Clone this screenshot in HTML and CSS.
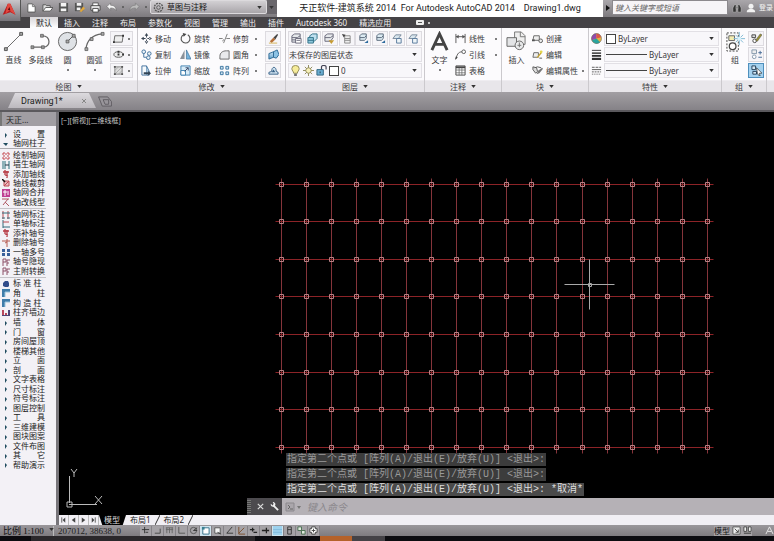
FILE: index.html
```html
<!DOCTYPE html>
<html lang="zh-CN">
<head>
<meta charset="utf-8">
<title>天正软件-建筑系统 2014</title>
<link rel="stylesheet" href="styles.css">
</head>
<body>
<svg class="sprite" aria-hidden="true">
  <defs>
    <linearGradient id="blueFill" x1="0" y1="0" x2="0" y2="1"><stop offset="0" stop-color="#cfe6f5"/><stop offset="1" stop-color="#5b9cc8"/></linearGradient>
  </defs>
  <symbol id="caret" viewBox="0 0 6 4"><path d="M0 0h6L3 4z" fill="#333"/></symbol>
  <symbol id="new" viewBox="0 0 12 12"><path d="M2 2h5l3 3v6H2z" fill="#fff" stroke="#555"/><path d="M7 2v3h3" fill="none" stroke="#777"/></symbol>
  <symbol id="open" viewBox="0 0 12 12"><path d="M1 10V3h3l1 1h4v2" fill="#ddd" stroke="#555"/><path d="M1 10l3-4h8l-3 4z" fill="#fff" stroke="#555"/></symbol>
  <symbol id="save" viewBox="0 0 12 12"><path d="M1 1h10v10H1z" fill="#555"/><path d="M3 1h6v4H3zM3 7h6v3H3z" fill="#f4f4f4"/></symbol>
  <symbol id="saveas" viewBox="0 0 12 12"><path d="M1 1h9v9H1z" fill="#555"/><path d="M3 1h5v3H3zM3 6h4v3H3z" fill="#f4f4f4"/><path d="M6 10l4-5 2 2-4 4z" fill="#e0a83c"/></symbol>
  <symbol id="print" viewBox="0 0 12 12"><path d="M3 1h6v4H3z" fill="#fff" stroke="#555"/><path d="M1 4h10v5H1z" fill="#eee" stroke="#444"/><path d="M3 7h6v4H3z" fill="#fff" stroke="#444"/></symbol>
  <symbol id="undo" viewBox="0 0 12 12"><path d="M1 5l4-4v2.500c4 0 6 2 6 6-1-2-3-3-6-3V9z" fill="#f4f4f4" stroke="#666" stroke-width=".6"/></symbol>
  <symbol id="redo" viewBox="0 0 12 12"><path d="M11 5L7 1v2.500c-4 0-6 2-6 6 1-2 3-3 6-3V9z" fill="#bbb" stroke="#777" stroke-width=".6"/></symbol>
  <symbol id="gear" viewBox="0 0 12 12"><circle cx="6" cy="6" r="4.500" fill="none" stroke="#555" stroke-width="1.500" stroke-dasharray="2 1"/><circle cx="6" cy="6" r="2" fill="none" stroke="#555"/></symbol>
  <symbol id="binoc" viewBox="0 0 12 12"><path d="M1 11V6l2-4h2v9zM11 11V6L9 2H7v9zM5 4h2v3H5z" fill="#333" stroke="#ccc" stroke-width=".6"/></symbol>
  <symbol id="user" viewBox="0 0 12 12"><circle cx="6" cy="4" r="3" fill="#f2f2f2"/><path d="M1 11c0-3 2-3 4-4h2c2 1 4 1 4 4z" fill="#f2f2f2"/></symbol>

  <symbol id="line" viewBox="0 0 22 22"><path d="M3 19L19 3" stroke="#666" fill="none"/><g fill="#aaa" stroke="#555"><path d="M1.500 17.500h3v3h-3zM17.500 1.500h3v3h-3z"/></g></symbol>
  <symbol id="pline" viewBox="0 0 22 22"><path d="M2 17h12c8 0 8-12-1-12H12" stroke="#666" stroke-width="1.300" fill="none"/><g fill="#999" stroke="#555" stroke-width=".7"><path d="M1 15.500h3v3H1zM12 15.500h3v3h-3zM11 3.500h3v3h-3z"/></g></symbol>
  <symbol id="circle" viewBox="0 0 22 22"><circle cx="11" cy="11" r="9.500" fill="#dfe2e6" stroke="#666"/><path d="M11 11l6-6" stroke="#555"/><path d="M9.500 9.500h3v3h-3zM16 3.500h3v3h-3z" fill="#aaa" stroke="#555" stroke-width=".8"/></symbol>
  <symbol id="arc" viewBox="0 0 22 22"><path d="M2 19C3 10 9 4 19 3" stroke="#666" stroke-width="1.200" fill="none"/><path d="M1 17.500h3v3H1zM6.500 7h3v3h-3zM18 1.500h3v3h-3z" fill="#aaa" stroke="#555" stroke-width=".8"/></symbol>
  <symbol id="rect" viewBox="0 0 12 12"><path d="M2 3h9l-1 7H1z" fill="#eee" stroke="#666"/><path d="M0 9h2v2H0zM10 2h2v2h-2z" fill="#333"/></symbol>
  <symbol id="ellipse" viewBox="0 0 12 12"><ellipse cx="6" cy="6" rx="5" ry="3" fill="#eee" stroke="#555"/><path d="M5 5h2v2H5zM5 2h2v2H5zM10 5h2v2h-2z" fill="#333"/></symbol>
  <symbol id="hatch" viewBox="0 0 12 12"><path d="M2 2h8v8H2z" fill="#ddd" stroke="#888"/><path d="M2 6l4-4M2 10l8-8M6 10l4-4" stroke="#999" stroke-width=".7"/><path d="M1 1h2v2H1zM9 1h2v2H9zM1 9h2v2H1zM9 9h2v2H9z" fill="#555"/></symbol>

  <symbol id="move" viewBox="0 0 12 12"><path d="M6 0l2 3H4zM6 12l2-3H4zM0 6l3-2v4zM12 6L9 4v4zM5.500 2h1v3h-1zM5.500 7h1v3h-1zM2 5.500h3v1H2zM7 5.500h3v1H7z" fill="#3a4654"/></symbol>
  <symbol id="copy" viewBox="0 0 12 12"><g fill="#e8f1f8" stroke="#3d6f9b"><circle cx="3" cy="3" r="2"/><circle cx="9" cy="5" r="2"/><circle cx="8" cy="9.500" r="2"/><path d="M3 5v4h3" fill="none"/></g></symbol>
  <symbol id="stretch" viewBox="0 0 12 12"><path d="M1 1h5v10H1z" fill="#f5f9fc" stroke="#3d6f9b"/><path d="M6 1l3 6v4H6" fill="#bcd8ec" stroke="#3d6f9b"/><path d="M3 8h5l-1-2 4 3-4 3 1-2H3z" fill="#345"/></symbol>
  <symbol id="rotate" viewBox="0 0 12 12"><path d="M8.500 2A4.800 4.800 0 1 1 4 1.800" fill="none" stroke="#555" stroke-width="1.200"/><path d="M3 0l4 1-3 3z" fill="#444"/></symbol>
  <symbol id="mirror" viewBox="0 0 12 12"><path d="M5 1v10H0z" fill="#8a9199"/><path d="M7 1v10h5z" fill="#77b3dc" stroke="#346a94" stroke-width=".7"/></symbol>
  <symbol id="scale" viewBox="0 0 12 12"><path d="M1 1h10v10H1z" fill="#d8ebf7" stroke="#3d7fae"/><path d="M1 6h5v5H1z" fill="#fff" stroke="#3d7fae"/><path d="M5 7l4-4M6 3h3v3" fill="none" stroke="#346"/></symbol>
  <symbol id="trim" viewBox="0 0 12 12"><path d="M0 6h4M8 6h4M5 11L9 1M4 9l1-2" stroke="#777" fill="none"/></symbol>
  <symbol id="fillet" viewBox="0 0 12 12"><path d="M1 11V8c0-4 3-6 7-6h3v9z" fill="#e9eaec" stroke="#666"/></symbol>
  <symbol id="array" viewBox="0 0 12 12"><g fill="#cfe3f1" stroke="#39739e"><path d="M1.500 1.500h3v3h-3zM7.500 1.500h3v3h-3zM1.500 7.500h3v3h-3zM7.500 7.500h3v3h-3z"/></g></symbol>
  <symbol id="erase" viewBox="0 0 12 12"><path d="M2 9l4-4 2 2-4 4z" fill="#b56f38"/><path d="M6 5l4-4 1 1-3 5z" fill="#444"/><path d="M1 11h9" stroke="#d3b04f"/></symbol>
  <symbol id="explode" viewBox="0 0 12 12"><path d="M1 5l5-2v6l-5 2z" fill="url(#blueFill)" stroke="#2b6894"/><path d="M6 3l4-2 2 5-3 4-3-1z" fill="#8dc3e5" stroke="#2b6894"/></symbol>
  <symbol id="offset" viewBox="0 0 12 12"><path d="M1 10V8l3-1c0-6 5-6 5 0l2 1v2z" fill="#cfe2f0" stroke="#345f85"/><path d="M4 8l2-3 2 3z" fill="#345f85"/></symbol>
  <symbol id="layers" viewBox="0 0 12 12"><path d="M1 3l3-2h6v6l-3 3H1z" fill="#e5e8eb" stroke="#667"/><path d="M1 5h6l3-2M1 7.500h5" fill="none" stroke="#667"/><path d="M5 6h6v5H5z" fill="#fff" stroke="#667"/><path d="M6 8h4" stroke="#667"/></symbol>
  <symbol id="layersBlue" viewBox="0 0 12 12"><path d="M3 3l3-2h5v5L8 9H3z" fill="#bfe0ef" stroke="#2d7087"/><path d="M1 5h6v6H1zM1 8h6" fill="#8fc7dc" stroke="#2d7087"/></symbol>
  <symbol id="layersPen" viewBox="0 0 12 12"><path d="M1 3l3-2h6v4L7 9H1z" fill="#e5e8eb" stroke="#667"/><path d="M1 5h6l3-2" fill="none" stroke="#667"/><path d="M5 8h6l-3 4z" fill="#c59b32"/></symbol>
  <symbol id="layersArrow" viewBox="0 0 12 12"><path d="M4 3h6v8H4zM4 6h6M4 8h6" fill="#eee" stroke="#888"/><path d="M1 1l4 1-2 3z" fill="#444"/></symbol>
  <symbol id="layersDown" viewBox="0 0 12 12"><path d="M2 3l2-2h5v5L7 8H2z" fill="#dcebf2" stroke="#567"/><path d="M2 5h5l2-2" fill="none" stroke="#567"/><path d="M7 11l4-3v3z" fill="#2d6b9e"/></symbol>
  <symbol id="layersOff" viewBox="0 0 12 12"><path d="M1 6l3-4h6L7 6z" fill="#d8e6ee" stroke="#789"/><path d="M5 6h5v5H5z" fill="#eef5f8" stroke="#579"/></symbol>
  <symbol id="bulb" viewBox="0 0 12 12"><path d="M4 9C4 7 2 6 2 4a4 3.500 0 0 1 8 0c0 2-2 3-2 5z" fill="#f6ec9a" stroke="#8d8652"/><path d="M4.500 9.500h3V12h-3z" fill="#777"/></symbol>
  <symbol id="sun" viewBox="0 0 12 12"><path d="M6 0v12M0 6h12M2 2l8 8M10 2l-8 8" stroke="#8c8657"/><circle cx="6" cy="6" r="3" fill="#f8f1b8" stroke="#8c8657"/></symbol>
  <symbol id="lock" viewBox="0 0 12 12"><path d="M1 5h7v6H1z" fill="#6aaed2" stroke="#2e647f"/><path d="M6 5V2c0-2 5-2 5 0v3" fill="none" stroke="#445" stroke-width="1.300"/><path d="M4 7h1v2H4z" fill="#234"/></symbol>
  <symbol id="bigA" viewBox="0 0 20 22"><path d="M2 20L10 3l8 17M5 14h10" fill="none" stroke="#444" stroke-width="3"/></symbol>
  <symbol id="dim" viewBox="0 0 12 12"><path d="M1 1v10M11 1v10M1 4h10" fill="none" stroke="#555"/><path d="M1 4l3-2v4zM11 4L8 2v4z" fill="#555"/></symbol>
  <symbol id="leader" viewBox="0 0 12 12"><path d="M1 11c1-4 2-8 7-8" fill="none" stroke="#555"/><circle cx="9.500" cy="3" r="2" fill="#fff" stroke="#555"/><path d="M0 12l1-4 2 1z" fill="#444"/></symbol>
  <symbol id="table" viewBox="0 0 12 12"><path d="M1 1h10v10H1z" fill="#fff" stroke="#444"/><path d="M1 2.500h10" stroke="#444" stroke-width="2"/><path d="M1 5.500h10M1 8.500h10M4.500 3v8M7.500 3v8" stroke="#666" stroke-width=".8"/></symbol>
  <symbol id="insert" viewBox="0 0 22 22"><path d="M9 1h7l4 4v9H9z" fill="#eee" stroke="#777"/><path d="M15 1v5h5" fill="none" stroke="#777"/><path d="M1 7h10v9H1z" fill="#e3e4e6" stroke="#666"/><circle cx="14" cy="15" r="4.500" fill="#e9eaeb" stroke="#666"/><path d="M14 12v5M12 15h4" stroke="#777"/></symbol>
  <symbol id="create" viewBox="0 0 12 12"><path d="M2 3h6v5H1l1-5z" fill="#eee" stroke="#666"/><circle cx="9.500" cy="8.500" r="2" fill="#eee" stroke="#555"/><path d="M0 7h3v2H0z" fill="#555"/></symbol>
  <symbol id="editBlock" viewBox="0 0 12 12"><path d="M2 4h5v5H1l1-5z" fill="#eee" stroke="#666"/><path d="M5 10l1-2 4-5 1 1-4 5z" fill="#c9a731"/><circle cx="10" cy="3" r="1.500" fill="#e3d54b"/><path d="M8 10h3" stroke="#555"/></symbol>
  <symbol id="editAttr" viewBox="0 0 12 12"><path d="M1 2l4 1 1 4-2 2-3-4z" fill="#ddd" stroke="#555"/><path d="M5 10l2-4 4-3 1 1-4 5z" fill="#777"/><path d="M3 3l3-1 4 1" fill="none" stroke="#555"/></symbol>
  <symbol id="wheel" viewBox="0 0 12 12"><circle cx="6" cy="6" r="5.500" fill="#e4b340"/><path d="M6 6V.500A5.500 5.500 0 0 0 1 8z" fill="#8f4cae"/><path d="M6 6L1 8a5.500 5.500 0 0 0 9 2z" fill="#2aa6a0"/><path d="M6 6V.500a5.500 5.500 0 0 1 5 4z" fill="#e0564a"/><circle cx="6" cy="6" r="5.500" fill="none" stroke="#666" stroke-width=".6"/></symbol>
  <symbol id="weights" viewBox="0 0 12 12"><path d="M1 1.500h10" stroke="#333"/><path d="M1 4.500h10" stroke="#333" stroke-width="1.600"/><path d="M1 7.500h10" stroke="#333" stroke-width="2"/><path d="M1 10.800h10" stroke="#333" stroke-width="2.400"/></symbol>
  <symbol id="types" viewBox="0 0 12 12"><path d="M1 2.500h10" stroke="#555" stroke-dasharray="3 1"/><path d="M1 5h10" stroke="#555"/><path d="M1 7.500h10" stroke="#555" stroke-dasharray="2 1"/><path d="M1 10h10" stroke="#555" stroke-dasharray="1 1"/></symbol>
  <symbol id="group" viewBox="0 0 22 22"><path d="M2 2h12v19H2z" fill="#fafafa" stroke="#444" stroke-dasharray="2 1.500"/><path d="M4 5h6v5H4z" fill="#f3edb0" stroke="#666"/><circle cx="8" cy="16" r="3.500" fill="#fff" stroke="#444" stroke-width="1.300"/><path d="M15 1v14M9 8h12M11 4l8 8M19 4l-8 8" stroke="#7fb9d4"/><circle cx="15" cy="8" r="2" fill="#d8f2fb"/></symbol>
  <symbol id="groupEdit" viewBox="0 0 12 12"><path d="M1 2h4v3H1z" fill="#ddd" stroke="#444"/><circle cx="4" cy="8.500" r="2" fill="#fff" stroke="#444"/><path d="M5 8l5-7 2 1-5 7z" fill="#9a9233" stroke="#444" stroke-width=".5"/></symbol>
  <symbol id="groupAdd" viewBox="0 0 12 12"><path d="M1 1h5v4H1z" fill="#eee" stroke="#8296aa"/><circle cx="3.500" cy="8.500" r="2" fill="#fff" stroke="#8296aa"/><path d="M8 4h4M10 2v4M8 9h4" stroke="#456a95"/></symbol>
  <symbol id="groupPick" viewBox="0 0 12 12"><path d="M1 1h4v4H1zM2 7h4v3H2z" fill="#d4e8f5" stroke="#223d55"/><path d="M6 3l6 6H9l1 3-2-1-1-2z" fill="#fff" stroke="#222" stroke-width=".7"/></symbol>

  <symbol id="tri" viewBox="0 0 8 8"><path d="M3 2l2 2-2 3z" fill="#1f4b5e"/></symbol>
  <symbol id="triDown" viewBox="0 0 8 8"><path d="M1 3h5L4 6z" fill="#1f4b5e"/></symbol>
  <symbol id="pGrid" viewBox="0 0 8 8"><path d="M2 0v8M6 0v8M0 2h8M0 6h8" stroke="#c4474e" stroke-dasharray="2 1"/></symbol>
  <symbol id="pWall" viewBox="0 0 8 8"><path d="M1 0v8M3 0v8M7 0v8" stroke="#28707c"/><path d="M3 4h4" stroke="#234"/></symbol>
  <symbol id="pAdd" viewBox="0 0 8 8"><path d="M1 2h6M3 0v5M5 1v7M3 5l3 1" stroke="#b63843" fill="none" stroke-width="1.300"/></symbol>
  <symbol id="pDel" viewBox="0 0 8 8"><path d="M0 2h8M5 0v8M3 4l2-1" stroke="#b65a50" fill="none"/></symbol>
  <symbol id="pCut" viewBox="0 0 8 8"><path d="M2 2h5v5H2zM2 7l5-5" stroke="#bd4854" fill="#e9bcc1"/><path d="M0 0l3 3" stroke="#111" stroke-width="1.500"/></symbol>
  <symbol id="pMerge" viewBox="0 0 8 8"><path d="M0 0h8v8H0z" fill="#bf3f92"/><path d="M1 3h6M3 1v6M5 5h2" stroke="#fff"/></symbol>
  <symbol id="pType" viewBox="0 0 8 8"><path d="M0 1h7M6 1L1 7M3 4l4 4" stroke="#b05965" fill="none"/></symbol>
  <symbol id="pDim" viewBox="0 0 8 8"><path d="M1 0v8M6 0v8" stroke="#b84b52"/><path d="M0 2h8M0 7h3M5 7h3" stroke="#356d7c"/></symbol>
  <symbol id="pDim1" viewBox="0 0 8 8"><path d="M1 0v8M1 7h7" stroke="#356d7c"/><path d="M1 2h6" stroke="#b84b52"/></symbol>
  <symbol id="pMulti" viewBox="0 0 8 8"><path d="M0 1h3v3H0zM5 1h3v3H5zM0 5h3v3H0zM5 5h3v3H5z" fill="#3a5f9a"/></symbol>
  <symbol id="pHide" viewBox="0 0 8 8"><path d="M1 8V1h3v3H1M5 8V2h3M5 5h2" stroke="#8d5168" fill="none"/></symbol>
  <symbol id="pCol" viewBox="0 0 8 8"><path d="M3 1h3l1 2v3L6 7H3L1 6V3z" fill="#314c8a"/></symbol>
  <symbol id="pCorner" viewBox="0 0 8 8"><path d="M0 0h8v3H3v5H0z" fill="#3f7ca9"/><path d="M3 3h5M3 3v5" stroke="#9cc5dc"/></symbol>
  <symbol id="pAlign" viewBox="0 0 8 8"><path d="M0 1h2v5H0zM3 4h2v2H3z" fill="#b9475c"/><path d="M6 1h2v5H6zM0 6h8v1H0z" fill="#4d4778"/></symbol>

  <symbol id="sCross" viewBox="0 0 10 10"><path d="M1 4h8M4 1v7M5 7h3" stroke="#333" fill="none"/></symbol>
  <symbol id="sSnap" viewBox="0 0 10 10"><path d="M2 8h6V3" stroke="#444" fill="none"/></symbol>
  <symbol id="sGrid" viewBox="0 0 10 10"><path d="M1 2h8M1 4h8M2 2v6M5 2v6M8 2v6" stroke="#666" fill="none"/></symbol>
  <symbol id="sOrtho" viewBox="0 0 10 10"><path d="M2 1v7h7" stroke="#555" fill="none"/></symbol>
  <symbol id="sPolar" viewBox="0 0 10 10"><circle cx="5" cy="5" r="3.500" stroke="#555" fill="none"/><path d="M5 5l4-3M5 5h4" stroke="#333"/></symbol>
  <symbol id="sOsnap" viewBox="0 0 10 10"><path d="M2 2h7v7H2z" fill="#fff" stroke="#2d6b84"/><path d="M1 1h3v3H1z" fill="#397f91"/></symbol>
  <symbol id="sOsnap3" viewBox="0 0 10 10"><path d="M2 2h6v6H2z" fill="#f4f4f4" stroke="#555"/><path d="M5 7l4 2" stroke="#333"/></symbol>
  <symbol id="sAngle" viewBox="0 0 10 10"><path d="M8 1L2 8h7" stroke="#333" fill="none"/></symbol>
  <symbol id="sDucs" viewBox="0 0 10 10"><path d="M2 1v8h7M2 8l6-6" stroke="#7b4e2c" fill="none"/></symbol>
  <symbol id="sPlus" viewBox="0 0 10 10"><path d="M1 5h8M6 2v6" stroke="#222" stroke-width="1.400"/></symbol>
  <symbol id="sDyn" viewBox="0 0 10 10"><path d="M1 4h5M4 2v4M5 7h4" stroke="#222" stroke-width="1.400"/></symbol>
  <symbol id="sBlue" viewBox="0 0 10 10"><path d="M0 0h10v10H0z" fill="#9ed2ee"/><path d="M0 4h10M0 7h10" stroke="#7fbadd"/></symbol>
  <symbol id="sBox" viewBox="0 0 10 10"><path d="M3 1h4v8H3zM3 4h4" stroke="#333" fill="none"/></symbol>
  <symbol id="sCycle" viewBox="0 0 10 10"><path d="M1 1h4v4H1zM5 5h4v4H5z" fill="#dfeadd" stroke="#456d4d"/></symbol>
  <symbol id="sMark" viewBox="0 0 10 10"><path d="M3 1h4v2h2v4H7v2H3V7H1V3h2z" fill="#fff" stroke="#444"/><path d="M3 5h4M5 3v4" stroke="#444"/></symbol>
  <symbol id="sPaper" viewBox="0 0 10 10"><path d="M1 1h8v8H1z" fill="#eee" stroke="#555"/><path d="M3 3l4 4M7 4v3H4" stroke="#444" fill="none"/></symbol>
  <symbol id="sViews" viewBox="0 0 10 10"><path d="M1 1h3v5H1zM6 1h3v5H6z" fill="#eee" stroke="#444"/><path d="M1 8h8" stroke="#333"/></symbol>
</svg>

<header class="titlebar">
  <button class="app-button" aria-label="应用程序菜单"><svg viewBox="0 0 20 20"><path d="M2 15L8 2h3l6 13-6-3z" fill="#b91c20"/><path d="M8 2L5 14l5-4 7 5-6-13z" fill="#e2483f"/><path d="M8 9l2-3 1 4z" fill="#5c0e10"/></svg></button>
  <nav class="quick">
    <button aria-label="新建"><svg><use href="#new"/></svg></button>
    <button aria-label="打开"><svg><use href="#open"/></svg></button>
    <button aria-label="保存"><svg><use href="#save"/></svg></button>
    <button aria-label="另存为"><svg><use href="#saveas"/></svg></button>
    <button aria-label="打印"><svg><use href="#print"/></svg></button>
    <button aria-label="放弃"><svg><use href="#undo"/></svg></button>
    <i class="dot"></i>
    <button aria-label="重做"><svg><use href="#redo"/></svg></button>
    <i class="dot"></i>
  </nav>
  <label class="workspace"><svg class="ico"><use href="#gear"/></svg><select aria-label="工作空间"><option>草图与注释</option></select><svg class="caret"><use href="#caret"/></svg></label>
  <button class="quick-more" aria-label="自定义"><svg class="caret"><use href="#caret"/></svg></button>
  <h1 class="doc-title">天正软件-建筑系统 2014  For Autodesk AutoCAD 2014    Drawing1.dwg</h1>
  <i class="search-arrow"></i>
  <input class="search" type="text" aria-label="搜索" placeholder="键入关键字或短语">
  <button class="info" aria-label="搜索"><svg><use href="#binoc"/></svg></button>
  <button class="info"><svg><use href="#user"/></svg><span>登录</span></button>
</header>

<nav class="tabs">
  <a class="active" href="#">默认</a><a href="#">插入</a><a href="#">注释</a><a href="#">布局</a><a href="#">参数化</a><a href="#">视图</a><a href="#">管理</a><a href="#">输出</a><a href="#">插件</a><a href="#">Autodesk 360</a><a href="#">精选应用</a>
  <button aria-label="最小化功能区"><i class="pill"></i><i class="dot light"></i></button>
</nav>

<section class="ribbon">
  <div class="panel draw">
    <div class="body">
      <button class="big"><svg><use href="#line"/></svg>直线</button>
      <button class="big"><svg><use href="#pline"/></svg>多段线</button>
      <button class="big"><svg><use href="#circle"/></svg>圆<i class="dot"></i></button>
      <button class="big"><svg><use href="#arc"/></svg>圆弧<i class="dot"></i></button>
      <div class="col">
        <button class="split" aria-label="矩形"><svg><use href="#rect"/></svg><i class="dot"></i></button>
        <button class="split" aria-label="椭圆"><svg><use href="#ellipse"/></svg><i class="dot"></i></button>
        <button class="split" aria-label="图案填充"><svg><use href="#hatch"/></svg><i class="dot"></i></button>
      </div>
    </div>
    <button class="foot">绘图<svg class="caret"><use href="#caret"/></svg></button>
  </div>
  <div class="panel modify">
    <div class="body">
      <div class="col">
        <button class="small"><svg><use href="#move"/></svg>移动</button>
        <button class="small"><svg><use href="#copy"/></svg>复制</button>
        <button class="small"><svg><use href="#stretch"/></svg>拉伸</button>
      </div>
      <div class="col">
        <button class="small"><svg><use href="#rotate"/></svg>旋转</button>
        <button class="small"><svg><use href="#mirror"/></svg>镜像</button>
        <button class="small"><svg><use href="#scale"/></svg>缩放</button>
      </div>
      <div class="col wide">
        <button class="small"><svg><use href="#trim"/></svg>修剪<i class="dot"></i></button>
        <button class="small"><svg><use href="#fillet"/></svg>圆角<i class="dot"></i></button>
        <button class="small"><svg><use href="#array"/></svg>阵列<i class="dot"></i></button>
      </div>
      <div class="col">
        <button class="boxed" aria-label="删除"><svg><use href="#erase"/></svg></button>
        <button class="boxed" aria-label="分解"><svg><use href="#explode"/></svg></button>
        <button class="boxed" aria-label="偏移"><svg><use href="#offset"/></svg></button>
      </div>
    </div>
    <button class="foot">修改<svg class="caret"><use href="#caret"/></svg></button>
  </div>
  <div class="panel layer">
    <div class="body col">
      <div class="layer-tools">
        <button class="boxed" aria-label="图层特性"><svg><use href="#layers"/></svg></button>
        <button class="boxed" aria-label="图层状态"><svg><use href="#layersBlue"/></svg></button>
        <button class="boxed" aria-label="匹配图层"><svg><use href="#layersPen"/></svg></button>
        <button class="boxed" aria-label="上一个图层"><svg><use href="#layersArrow"/></svg></button>
        <button class="boxed" aria-label="隔离"><svg><use href="#layersDown"/></svg></button>
        <button class="boxed" aria-label="取消隔离"><svg><use href="#layersDown"/></svg></button>
        <button class="boxed" aria-label="冻结"><svg><use href="#layersOff"/></svg></button>
        <button class="boxed" aria-label="关闭"><svg><use href="#layersOff"/></svg></button>
      </div>
      <label class="combo"><select aria-label="图层状态"><option>未保存的图层状态</option></select><svg class="caret"><use href="#caret"/></svg></label>
      <label class="combo layer-now"><svg class="ico"><use href="#bulb"/></svg><svg class="ico"><use href="#sun"/></svg><svg class="ico"><use href="#lock"/></svg><i class="swatch"></i><select aria-label="图层"><option>0</option></select><svg class="caret"><use href="#caret"/></svg></label>
    </div>
    <button class="foot">图层<svg class="caret"><use href="#caret"/></svg></button>
  </div>
  <div class="panel annot">
    <div class="body">
      <button class="big"><svg><use href="#bigA"/></svg>文字<i class="dot"></i></button>
      <div class="col wide">
        <button class="small"><svg><use href="#dim"/></svg>线性<i class="dot"></i></button>
        <button class="small"><svg><use href="#leader"/></svg>引线<i class="dot"></i></button>
        <button class="small"><svg><use href="#table"/></svg>表格</button>
      </div>
    </div>
    <button class="foot">注释<svg class="caret"><use href="#caret"/></svg></button>
  </div>
  <div class="panel block">
    <div class="body">
      <button class="big"><svg><use href="#insert"/></svg>插入</button>
      <div class="col wide">
        <button class="small"><svg><use href="#create"/></svg>创建</button>
        <button class="small"><svg><use href="#editBlock"/></svg>编辑</button>
        <button class="small"><svg><use href="#editAttr"/></svg>编辑属性<i class="dot"></i></button>
      </div>
    </div>
    <button class="foot">块<svg class="caret"><use href="#caret"/></svg></button>
  </div>
  <div class="panel props">
    <div class="body col">
      <div class="prop"><svg class="ico"><use href="#wheel"/></svg><label class="combo"><i class="swatch"></i><select aria-label="颜色"><option>ByLayer</option></select><svg class="caret"><use href="#caret"/></svg></label></div>
      <div class="prop"><svg class="ico"><use href="#weights"/></svg><label class="combo"><i class="rule"></i><select aria-label="线宽"><option>ByLayer</option></select><svg class="caret"><use href="#caret"/></svg></label></div>
      <div class="prop"><svg class="ico"><use href="#types"/></svg><label class="combo"><i class="rule"></i><select aria-label="线型"><option>ByLayer</option></select><svg class="caret"><use href="#caret"/></svg></label></div>
    </div>
    <button class="foot">特性<svg class="caret"><use href="#caret"/></svg></button>
  </div>
  <div class="panel grp">
    <div class="body">
      <button class="big"><svg><use href="#group"/></svg>组</button>
      <div class="col">
        <button class="boxed" aria-label="编辑组"><svg><use href="#groupEdit"/></svg></button>
        <button class="boxed" aria-label="添加到组"><svg><use href="#groupAdd"/></svg></button>
        <button class="boxed on" aria-label="组选择"><svg><use href="#groupPick"/></svg></button>
      </div>
    </div>
    <button class="foot">组<svg class="caret"><use href="#caret"/></svg></button>
  </div>
  <div class="panel rest"><div class="body"></div><div class="foot"></div></div>
</section>

<nav class="files">
  <a class="file" href="#"><span>Drawing1*</span><svg viewBox="0 0 6 6"><path d="M1 1l4 4M5 1L1 5" stroke="#888"/></svg></a>
  <button class="add" aria-label="新图形"><svg viewBox="0 0 16 12"><path d="M1 1h10l4 5v5H5z" fill="#98959a" stroke="#5e5b60"/><path d="M6 4h6v5H8z" fill="none" stroke="#5e5b60"/></svg></button>
</nav>

<main class="work">
  <aside class="palette">
    <h2>天正...</h2>
    <div class="items g2">
      <a href="#"><svg><use href="#tri"/></svg><span>设 置</span></a>
      <a href="#"><svg><use href="#triDown"/></svg><span>轴网柱子</span></a>
    </div>
    <div class="items g6">
      <a href="#"><svg><use href="#pGrid"/></svg><span>绘制轴网</span></a>
      <a href="#"><svg><use href="#pWall"/></svg><span>墙生轴网</span></a>
      <a href="#"><svg><use href="#pAdd"/></svg><span>添加轴线</span></a>
      <a href="#"><svg><use href="#pCut"/></svg><span>轴线裁剪</span></a>
      <a href="#"><svg><use href="#pMerge"/></svg><span>轴网合并</span></a>
      <a href="#"><svg><use href="#pType"/></svg><span>轴改线型</span></a>
    </div>
    <div class="items g7">
      <a href="#"><svg><use href="#pDim"/></svg><span>轴网标注</span></a>
      <a href="#"><svg><use href="#pDim1"/></svg><span>单轴标注</span></a>
      <a href="#"><svg><use href="#pAdd"/></svg><span>添补轴号</span></a>
      <a href="#"><svg><use href="#pDel"/></svg><span>删除轴号</span></a>
      <a href="#"><svg><use href="#pMulti"/></svg><span>一轴多号</span></a>
      <a href="#"><svg><use href="#pHide"/></svg><span>轴号隐现</span></a>
      <a href="#"><svg><use href="#pHide"/></svg><span>主附转换</span></a>
    </div>
    <div class="items g4">
      <a href="#"><svg><use href="#pCol"/></svg><span class="three">标 准 柱</span></a>
      <a href="#"><svg><use href="#pCorner"/></svg><span>角 柱</span></a>
      <a href="#"><svg><use href="#pCorner"/></svg><span class="three">构 造 柱</span></a>
      <a href="#"><svg><use href="#pAlign"/></svg><span>柱齐墙边</span></a>
    </div>
    <div class="items g16">
      <a href="#"><svg><use href="#tri"/></svg><span>墙 体</span></a>
      <a href="#"><svg><use href="#tri"/></svg><span>门 窗</span></a>
      <a href="#"><svg><use href="#tri"/></svg><span>房间屋顶</span></a>
      <a href="#"><svg><use href="#tri"/></svg><span>楼梯其他</span></a>
      <a href="#"><svg><use href="#tri"/></svg><span>立 面</span></a>
      <a href="#"><svg><use href="#tri"/></svg><span>剖 面</span></a>
      <a href="#"><svg><use href="#tri"/></svg><span>文字表格</span></a>
      <a href="#"><svg><use href="#tri"/></svg><span>尺寸标注</span></a>
      <a href="#"><svg><use href="#tri"/></svg><span>符号标注</span></a>
      <a href="#"><svg><use href="#tri"/></svg><span>图层控制</span></a>
      <a href="#"><svg><use href="#tri"/></svg><span>工 具</span></a>
      <a href="#"><svg><use href="#tri"/></svg><span>三维建模</span></a>
      <a href="#"><svg><use href="#tri"/></svg><span>图块图案</span></a>
      <a href="#"><svg><use href="#tri"/></svg><span>文件布图</span></a>
      <a href="#"><svg><use href="#tri"/></svg><span>其 它</span></a>
      <a href="#"><svg><use href="#tri"/></svg><span>帮助演示</span></a>
    </div>
  </aside>
  <section class="editor">
    <div class="canvas">
      <svg class="drawing" aria-label="轴网">
        <defs>
          <path id="cols" d="M0-6v275M25-6v275M50-6v275M75-6v275M100-6v275M125-6v275M150-6v275M175-6v275M200-6v275M225-6v275M250-6v275M275-6v275M301-6v275M326-6v275M351-6v275M376-6v275M401-6v275M426-6v275"/>
          <path id="grips" d="M-2-2h4v4h-4zM23-2h4v4h-4zM48-2h4v4h-4zM73-2h4v4h-4zM98-2h4v4h-4zM123-2h4v4h-4zM148-2h4v4h-4zM173-2h4v4h-4zM198-2h4v4h-4zM223-2h4v4h-4zM248-2h4v4h-4zM273-2h4v4h-4zM299-2h4v4h-4zM324-2h4v4h-4zM349-2h4v4h-4zM374-2h4v4h-4zM399-2h4v4h-4zM424-2h4v4h-4z"/>
        </defs>
        <g transform="translate(222.5 72.5)">
          <use href="#cols" class="axis-v"/>
          <path class="axis-h" d="M-6 0h438M-6 37h438M-6 75h438M-6 112h438M-6 150h438M-6 188h438M-6 225h438M-6 263h438"/>
          <g class="grips">
            <use href="#grips"/><use href="#grips" y="37"/><use href="#grips" y="75"/><use href="#grips" y="112"/><use href="#grips" y="150"/><use href="#grips" y="188"/><use href="#grips" y="225"/><use href="#grips" y="263"/>
          </g>
        </g>
        <g class="cursor" transform="translate(530.5 172.5)"><path d="M-25 0h50M0-25v50"/><path d="M-1-1h3v3h-3z"/></g>
      </svg>
      <p class="view-label">[−][俯视][二维线框]</p>
      <svg class="ucs" viewBox="0 0 44 44"><path d="M9 36.500h28M9.500 8v27M7 34h5v5H7zM35 28l7 8M42 28l-7 8M11 1l3 4 3-4M14 5v4" fill="none" stroke="#bbb"/></svg>
      <div class="console">
        <p>指定第二个点或 [阵列(A)/退出(E)/放弃(U)] &lt;退出&gt;:</p>
        <p>指定第二个点或 [阵列(A)/退出(E)/放弃(U)] &lt;退出&gt;:</p>
        <p class="last">指定第二个点或 [阵列(A)/退出(E)/放弃(U)] &lt;退出&gt;: *取消*</p>
        <div class="command">
          <div class="handle">
            <i class="grab"></i>
            <button aria-label="关闭"><svg viewBox="0 0 10 10"><path d="M2 2l6 6M8 2L2 8" stroke="#ddd" stroke-width="1.300"/></svg></button>
            <button aria-label="自定义"><svg viewBox="0 0 10 10"><path d="M4 4l5 5" stroke="#eee" stroke-width="2"/><path d="M1 2l2 2 1-2-1-2c3 0 4 3 2 5-3 1-5-1-4-3z" fill="#eee"/></svg></button>
          </div>
          <svg class="prompt" viewBox="0 0 16 10"><path d="M1 1h8v8H1z" fill="#aaa6ab" stroke="#8b888d"/><path d="M3 3l2 2-2 2M5 7h3" stroke="#666" fill="none"/><path d="M12 4h4l-2 3z" fill="#777"/></svg>
          <input type="text" aria-label="命令" placeholder="键入命令">
        </div>
      </div>
    </div>
    <nav class="layouts">
      <button aria-label="第一个"><svg viewBox="0 0 8 8"><path d="M2 1v6" stroke="#555"/><path d="M6 1v6L3 4z" fill="#444"/></svg></button>
      <button aria-label="上一个"><svg viewBox="0 0 8 8"><path d="M6 1v6L2 4z" fill="#444"/></svg></button>
      <button aria-label="下一个"><svg viewBox="0 0 8 8"><path d="M2 1v6l4-3z" fill="#444"/></svg></button>
      <button aria-label="最后一个"><svg viewBox="0 0 8 8"><path d="M6 1v6" stroke="#555"/><path d="M2 1v6l3-3z" fill="#444"/></svg></button>
      <a class="model" href="#">模型</a><a href="#">布局1</a><svg class="slash" viewBox="0 0 5 10"><path d="M0 10L5 0" stroke="#333"/></svg><a href="#">布局2</a><svg class="slash" viewBox="0 0 5 10"><path d="M0 10L5 0" stroke="#333"/></svg>
    </nav>
  </section>
</main>

<footer class="status">
  <button class="ratio">比例 1:100<svg class="caret"><use href="#caret"/></svg></button>
  <output class="coords">207012, 38638, 0</output>
  <div class="toggles">
    <button aria-label="推断约束"><svg><use href="#sCross"/></svg></button>
    <button aria-label="捕捉"><svg><use href="#sSnap"/></svg></button>
    <button aria-label="栅格"><svg><use href="#sGrid"/></svg></button>
    <button aria-label="正交"><svg><use href="#sOrtho"/></svg></button>
    <button aria-label="极轴"><svg><use href="#sPolar"/></svg></button>
    <button class="on" aria-label="对象捕捉"><svg><use href="#sOsnap"/></svg></button>
    <button aria-label="三维捕捉"><svg><use href="#sOsnap3"/></svg></button>
    <button aria-label="追踪"><svg><use href="#sAngle"/></svg></button>
    <button aria-label="动态UCS"><svg><use href="#sDucs"/></svg></button>
    <button aria-label="动态输入"><svg><use href="#sDyn"/></svg></button>
    <button aria-label="线宽"><svg><use href="#sPlus"/></svg></button>
    <button class="on" aria-label="透明度"><svg><use href="#sBlue"/></svg></button>
    <button aria-label="快捷特性"><svg><use href="#sBox"/></svg></button>
    <button aria-label="选择循环"><svg><use href="#sCycle"/></svg></button>
    <button aria-label="注释监视器"><svg><use href="#sMark"/></svg></button>
  </div>
  <div class="space">
    <button>模型</button>
    <button aria-label="布局"><svg><use href="#sPaper"/></svg></button>
    <button aria-label="快速查看"><svg><use href="#sViews"/></svg></button>
  </div>
  <button class="scale-btn" aria-label="注释比例"><svg viewBox="0 0 10 10"><path d="M1 9l4-8 4 8M3 6h4" fill="none" stroke="#eee"/></svg></button>
</footer>
<div class="taskbar"><i class="start"></i><i class="run"></i><i class="hot"></i><i class="next"></i></div>
</body>
</html>
```
FILE: styles.css
```css
* { box-sizing: border-box; margin: 0; padding: 0; }
body {
  display: flex;
  flex-direction: column;
  min-height: 100vh;
  overflow: hidden;
  background: #0c0c0e;
  color: #3a3a3c;
  font: 8px/10px "Noto Sans", "Noto Sans CJK SC", sans-serif;
}
button, select, input { border: 0; background: none; color: inherit; font: inherit; outline: 0; }
select { appearance: none; min-width: 0; }
a { color: inherit; text-decoration: none; }
svg { display: block; flex: none; }
.sprite { position: absolute; width: 0; height: 0; }
.caret { width: 5px; height: 3px; }
.dot { width: 2px; height: 2px; background: #555; border-radius: 1px; flex: none; }
.dot.light { background: #eee; }
.ico { width: 11px; height: 11px; }

.titlebar { display: flex; height: 17px; background: linear-gradient(#aaa7ab, #7d7a7e); }
.app-button {
  position: relative; z-index: 2; width: 21px; height: 21px; padding: 1px;
  background: linear-gradient(#c9c6ca, #77747a); border-right: 1px solid #555; flex: none;
}
.app-button svg { width: 17px; height: 17px; }
.quick { display: flex; align-items: center; gap: 5px; padding: 0 5px 3px; width: 129px; flex: none; }
.quick svg { width: 11px; height: 11px; }
.workspace {
  display: flex; align-items: center; gap: 3px; width: 117px; height: 14px; padding: 0 4px 0 2px;
  background: linear-gradient(#d2d0d3, #a9a6aa); border: 1px solid #dcdadd; border-radius: 2px; color: #111; flex: none;
}
.workspace select { flex: 1; }
.quick-more { width: 10px; height: 14px; padding: 0 2px; background: #69666b; flex: none; }
.doc-title {
  flex: 1; background: #fff; color: #222; white-space: pre; text-align: center;
  font: 400 9px/16px Roboto, "Noto Sans CJK SC", sans-serif;
}
.search-arrow { width: 4px; height: 6px; margin: 5px 2px 0 3px; background: #111; clip-path: polygon(0 0, 100% 50%, 0 100%); flex: none; }
.search { width: 116px; height: 15px; padding: 0 2px; background: #f6f4f7; border: 1px solid #8c898d; font-style: italic; flex: none; }
.search::placeholder { color: #666; }
.info { display: flex; align-items: center; gap: 3px; height: 15px; padding-left: 4px; color: #f4f4f4; font-size: 7px; white-space: nowrap; flex: none; }
.info:last-child { padding-right: 1px; }
.info svg { width: 10px; height: 10px; }

.tabs { display: flex; height: 11px; padding-left: 30px; background: #454346; color: #f0f0f0; line-height: 11px; }
.tabs a { padding: 0 6px; white-space: nowrap; }
.tabs .active { background: linear-gradient(#d8d6d9, #fff); color: #222; }
.tabs button { display: flex; align-items: center; gap: 4px; padding-left: 19px; }
.pill { width: 8px; height: 5px; border: 2px solid #eee; border-radius: 1px; background: #555; }

.ribbon { display: flex; height: 64px; background: #fcfbfd; }
.panel { display: flex; flex-direction: column; border-right: 1px solid #cbc9cd; flex: none; }
.panel .body { display: flex; height: 52px; padding-top: 3px; }
.col, .panel .body.col { display: flex; flex-direction: column; gap: 1px; }
.foot {
  display: flex; align-items: center; justify-content: center; gap: 5px; height: 12px;
  background: #e8e6ea; border-top: 1px solid #efedf1;
}
.draw { width: 138px; }
.modify { width: 148px; }
.layer { width: 139px; }
.annot { width: 77px; }
.block { width: 87px; }
.props { width: 133px; }
.grp { width: 45px; }
.rest { flex: 1; border: 0; }
.big { display: flex; flex-direction: column; align-items: center; width: 27px; line-height: 10px; white-space: nowrap; }
.big svg { width: 21px; height: 21px; margin-bottom: 3px; }
.big .dot { margin-top: 4px; }
.draw .col { padding-left: 2px; }
.split, .boxed { display: flex; align-items: center; height: 15px; background: #f6f5f8; border: 1px solid #dddbe0; }
.split { width: 23px; justify-content: space-around; }
.split svg, .boxed svg, .small svg { width: 11px; height: 11px; }
.boxed { width: 16px; justify-content: center; }
.boxed.on { background: #a5d2ef; border-color: #4f90bd; }
.small { display: flex; align-items: center; gap: 3px; height: 15px; padding-left: 3px; white-space: nowrap; }
.modify .col { width: 39px; }
.modify .wide { width: 49px; }
.modify .col:last-child { width: 16px; }
.small .dot { margin-left: auto; }
.modify .small .dot { margin-right: 8px; }
.layer .body { padding-left: 2px; padding-right: 2px; }
.layer-tools { display: flex; justify-content: space-between; }
.combo {
  display: flex; align-items: center; flex: 1; gap: 2px; height: 15px; max-height: 15px; min-width: 0;
  padding: 0 4px 0 1px; background: #f8f7fa; border: 1px solid #e2e0e5;
}
.layer .combo:not(.layer-now) { padding-left: 0; }
.combo select { flex: 1; }
.swatch { width: 10px; height: 10px; border: 1px solid #444; background: #fff; flex: none; }
.annot .big, .block .big { width: 29px; }
.annot .wide, .block .wide { flex: 1; padding-right: 4px; }
.annot .small, .block .small { padding-left: 1px; }
.props .body { padding-left: 2px; padding-right: 2px; }
.prop { display: flex; align-items: center; gap: 2px; }
.rule { width: 41px; height: 1px; background: #444; flex: none; }
.grp .body { justify-content: space-between; padding-right: 2px; }

.files { display: flex; align-items: flex-end; height: 20px; padding: 0 8px 2px; background: linear-gradient(#a29fa3, #858287); border-bottom: 2px solid #5b595d; }
.file {
  display: flex; align-items: center; justify-content: space-between; width: 88px; height: 15px; padding: 0 9px 0 13px;
  background: linear-gradient(#dcdade, #bcb9be); clip-path: polygon(7px 0, 92% 0, 100% 100%, 0 100%);
  color: #222; font-family: Roboto, sans-serif; font-size: 9px;
}
.file svg { width: 6px; height: 6px; }
.add { margin-left: 1px; height: 13px; }
.add svg { width: 16px; height: 11px; }

.work { display: flex; flex: 1; min-height: 0; }
.palette { width: 59px; background: #f3f1f6; border-right: 3px solid #77757a; flex: none; }
.palette h2 { height: 14px; padding-left: 4px; background: #a19ea3; border-left: 2px solid #777; color: #222; font-size: 8px; line-height: 15px; font-weight: 400; }
.items { display: grid; grid-auto-rows: 1fr; margin-right: 10px; color: #222; font-family: "Liberation Sans", "Noto Sans CJK SC", sans-serif; line-height: 9px; }
.items a { display: flex; align-items: center; gap: 3px; height: 9px; padding-left: 2px; }
.items svg { width: 8px; height: 8px; }
.items span { width: 32px; height: 9px; text-align: justify; text-align-last: justify; white-space: nowrap; }
.items .three { width: 28px; }
.g2 { height: 23px; padding-top: 4px; border-bottom: 1px solid #aaa8ad; }
.g6 { height: 60px; padding: 2px 0 1px; border-bottom: 1px solid #c5c3c8; }
.g7 { height: 69px; padding: 1px 0 1px; border-bottom: 1px solid #c5c3c8; }
.g4 { height: 40px; padding-top: 1px; }
.g16 { height: 152px; }

.editor { display: flex; flex-direction: column; flex: 1; min-width: 0; }
.canvas { position: relative; flex: 1; background: #000; overflow: hidden; }
.drawing { position: absolute; inset: 0; width: 100%; height: 100%; fill: none; }
.axis-v { stroke: #85343a; }
.axis-h { stroke: #8c2327; }
.grips { stroke: #b98286; }
.cursor { stroke: #a9a9a9; }
.view-label { position: absolute; left: 2px; top: 4px; color: #c8c8c8; font-size: 7px; line-height: 9px; }
.ucs { position: absolute; left: 1px; bottom: 3px; width: 44px; height: 44px; }
.console { position: absolute; left: 188px; right: 0; bottom: 0; display: flex; flex-direction: column; align-items: flex-start; gap: 2px; }
.console p { margin-left: 39px; padding: 0 1px; background: #3c3c3c; color: #999; font: 10px/13px "Liberation Mono", "Noto Sans CJK SC", monospace; white-space: pre; }
.console .last { background: #4a4a4a; color: #ddd; }
.command { display: flex; align-items: center; align-self: stretch; height: 17px; background: #b5b1b6; }
.handle { display: flex; align-items: center; gap: 5px; width: 35px; height: 100%; background: #4c4a4e; }
.grab { width: 4px; height: 13px; background: repeating-linear-gradient(#777 0 1px, #444 1px 2px); }
.handle svg { width: 9px; height: 9px; }
.prompt { width: 16px; height: 10px; margin-left: 3px; }
.command input { flex: 1; min-width: 0; padding-left: 6px; font-size: 10px; font-style: italic; }
.command input::placeholder { color: #8a878c; }
.layouts { display: flex; height: 10px; background: #f1eff4; color: #222; line-height: 10px; }
.layouts button { width: 10px; height: 10px; padding: 1px; border-right: 1px solid #bbb; }
.layouts svg { width: 7px; height: 8px; }
.layouts a { padding: 0 4px; }
.layouts .model { padding: 0 6px 0 5px; background: #000; color: #ddd; clip-path: polygon(0 0, 100% 0, 88% 100%, 12% 100%); }
.layouts .slash { width: 5px; height: 10px; }

.status { display: flex; align-items: center; height: 11px; background: linear-gradient(#9a979b, #7f7c80); color: #111; }
.ratio { display: flex; align-items: flex-start; gap: 5px; width: 54px; padding-left: 3px; border-right: 1px solid #bbb; font: 9px/10px "Liberation Serif", "Noto Sans CJK SC", serif; white-space: nowrap; }
.ratio .caret { margin-top: 2px; }
.coords { width: 86px; padding-left: 4px; color: #222; font: 9px/10px "Liberation Serif", serif; white-space: nowrap; }
.toggles { display: flex; }
.toggles button { width: 12px; height: 10px; padding: 0 1px; border-right: 1px solid #858287; background: #a5a2a6; }
.toggles .on { background: #cfe4ee; }
.toggles svg { width: 9px; height: 9px; }
.space { display: flex; align-items: center; gap: 2px; margin-left: auto; background: #a5a2a6; }
.space svg, .scale-btn svg { width: 9px; height: 9px; }
.scale-btn { margin-left: 13px; width: 9px; }
.taskbar { display: flex; height: 5px; background: #0c0c10; }
.taskbar .start { width: 31px; }
.taskbar .run { width: 224px; background: #2b282b; }
.taskbar .hot { width: 32px; margin-left: 65px; background: #b5622a; }
.taskbar .next { width: 33px; background: #444246; }
```
